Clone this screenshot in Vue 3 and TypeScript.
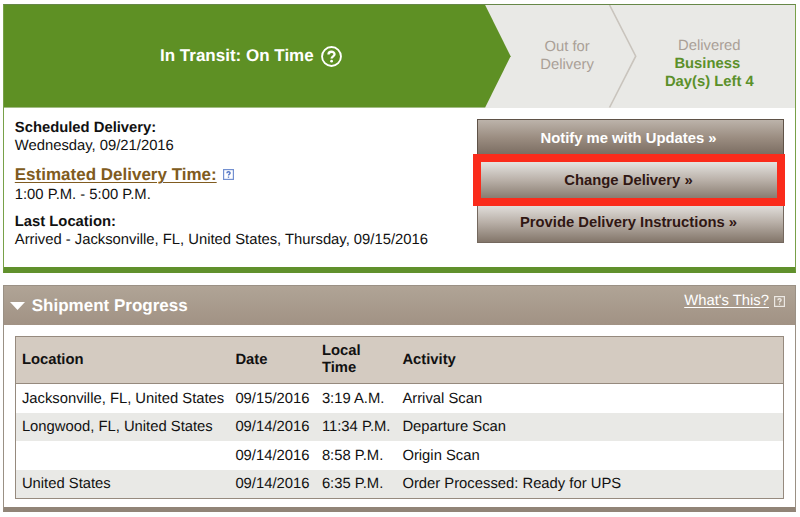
<script setup lang="ts">
interface ScanRow {
  location: string
  date: string
  time: string
  activity: string
}

const rows: ScanRow[] = [
  { location: 'Jacksonville, FL, United States', date: '09/15/2016', time: '3:19 A.M.', activity: 'Arrival Scan' },
  { location: 'Longwood, FL, United States', date: '09/14/2016', time: '11:34 P.M.', activity: 'Departure Scan' },
  { location: '', date: '09/14/2016', time: '8:58 P.M.', activity: 'Origin Scan' },
  { location: 'United States', date: '09/14/2016', time: '6:35 P.M.', activity: 'Order Processed: Ready for UPS' },
]
</script>

<template>
  <main class="page">
    <section class="status-card">
      <div class="steps">
        <svg class="steps-bg" viewBox="0 0 792 102.5" preserveAspectRatio="none" aria-hidden="true">
          <path d="M0 0H481.5L507 51.2L481.5 102.5H0Z" fill="#5e9024" />
          <path d="M606 0L632.2 51.2L606 102.5" fill="none" stroke="#c9c4bd" stroke-width="1.6" />
        </svg>
        <div class="step current">
          <span>In Transit: On Time</span>
          <svg class="help-round" viewBox="0 0 20 20" aria-hidden="true">
            <circle cx="10" cy="10" r="9" fill="none" stroke="#fff" stroke-width="1.8" />
            <path d="M7.1 8.2C7.1 4.6 12.9 4.6 12.9 7.9C12.9 9.9 10.1 9.8 10.1 12" fill="none" stroke="#fff" stroke-width="2.2" />
            <circle cx="10.1" cy="14.5" r="1.3" fill="#fff" />
          </svg>
        </div>
        <div class="step out">Out for<br />Delivery</div>
        <div class="step delivered">
          <span>Delivered</span>
          <strong class="business">Business</strong>
          <strong>Day(s) Left 4</strong>
        </div>
      </div>

      <div class="details">
        <div class="info">
          <p><b>Scheduled Delivery:</b><br />Wednesday, 09/21/2016</p>
          <p class="estimate">
            <span class="estimate-line">
              <a class="estimate-link">Estimated Delivery Time:</a>
              <svg class="help-blue" viewBox="0 0 11 11" aria-hidden="true">
                <rect x=".6" y=".6" width="9.8" height="9.8" fill="#fff" stroke="#7390d0" stroke-width="1.2" />
                <path d="M3.9 4.3C3.9 2.2 7.2 2.3 7.1 4.1C7 5.2 5.5 5.1 5.5 6.6M5.5 7.5V8.7" fill="none" stroke="#5577c6" stroke-width="1.4" />
              </svg>
            </span>
            1:00 P.M. - 5:00 P.M.
          </p>
          <p class="last"><b>Last Location:</b><br /><span class="arrived">Arrived - Jacksonville, FL, United States, Thursday, 09/15/2016</span></p>
        </div>
        <div class="actions">
          <button class="btn notify">Notify me with Updates »</button>
          <button class="btn change">Change Delivery »</button>
          <button class="btn provide">Provide Delivery Instructions »</button>
          <span class="highlight"></span>
        </div>
      </div>
    </section>

    <section class="progress-card">
      <header class="progress-head">
        <svg class="caret" viewBox="0 0 15 8" aria-hidden="true"><path d="M0 0H15L7.5 8Z" fill="#fff" /></svg>
        <h2>Shipment Progress</h2>
        <a class="whats">What's This?</a>
        <svg class="help-small" viewBox="0 0 11 11" aria-hidden="true">
          <rect x=".6" y=".6" width="9.8" height="9.8" fill="none" stroke="#ece8e3" stroke-width="1.2" />
          <path d="M3.9 4.3C3.9 2.2 7.2 2.3 7.1 4.1C7 5.2 5.5 5.1 5.5 6.6M5.5 7.5V8.7" fill="none" stroke="#eeeae5" stroke-width="1.3" />
        </svg>
      </header>
      <div class="table">
        <div class="row head">
          <span>Location</span><span>Date</span><span>Local<br />Time</span><span>Activity</span>
        </div>
        <div v-for="(row, i) in rows" :key="i" class="row" :class="{ shaded: i % 2 === 1 }">
          <span>{{ row.location }}</span><span>{{ row.date }}</span><span>{{ row.time }}</span><span>{{ row.activity }}</span>
        </div>
      </div>
    </section>
  </main>
</template>

<style>
body {
  margin: 0;
  background: #fff;
}
</style>

<style scoped>
* {
  box-sizing: border-box;
}
.page {
  width: 800px;
  height: 517px;
  padding: 4px 4px 0 2.6px;
  overflow: hidden;
  background: #fefefe;
  color: #111;
  font: 14.8px/18px "Liberation Sans", Arial, sans-serif;
  text-rendering: geometricPrecision;
}
.status-card {
  height: 269.3px;
  border: 1px solid #78a048;
  border-top-color: #668747;
  border-bottom: 6px solid #60902c;
  background: #fff;
}
.steps {
  position: relative;
  display: grid;
  grid-template-columns: 495px 137px 1fr;
  align-items: center;
  height: 102.5px;
  background: #e9e9e6;
  color: #aaa097;
  text-align: center;
}
.steps-bg {
  position: absolute;
  inset: 0;
  width: 100%;
  height: 100%;
}
.step {
  position: relative;
}
.current {
  display: flex;
  align-items: center;
  justify-content: center;
  gap: 7.5px;
  color: #fff;
  font-size: 17px;
  font-weight: bold;
}
.help-round {
  width: 21px;
  height: 21px;
}
.delivered {
  display: flex;
  flex-direction: column;
  padding: 15px 12px 0 0;
}
.delivered strong {
  color: #5b902a;
}
.business {
  padding-right: 4px;
}
.details {
  display: flex;
  justify-content: space-between;
  padding: 11px 11.5px 0 11.2px;
}
p {
  margin: 0;
}
.estimate {
  display: flex;
  flex-direction: column;
  margin-top: 9px;
}
.estimate-line {
  display: flex;
  align-items: center;
  gap: 6px;
  height: 22px;
}
.estimate-link {
  color: #805b20;
  font-size: 17px;
  font-weight: bold;
  text-decoration: underline;
  text-decoration-thickness: 1px;
  text-underline-offset: 2px;
}
.help-blue,
.help-small {
  width: 11px;
  height: 11px;
}
.last {
  margin-top: 9.5px;
}
.arrived {
  white-space: nowrap;
}
.actions {
  position: relative;
  display: flex;
  flex-direction: column;
  gap: 2px;
  width: 307px;
}
.btn {
  height: 40px;
  padding: 0 3px 2px 0;
  border: 1px solid #74685e;
  background: linear-gradient(#e5e3e0, #b9b0a8 48%, #83766a);
  color: #301713;
  font: bold 14.8px/18px "Liberation Sans", Arial, sans-serif;
}
.notify {
  border-color: #5f5247;
  background: linear-gradient(#bcb3aa, #9a8c80 48%, #74665b);
  color: #fff;
}
.highlight {
  position: absolute;
  top: 35.5px;
  left: -4px;
  width: 312px;
  height: 51.5px;
  border: 8.5px solid #fa2b1b;
}
.progress-card {
  height: 227.2px;
  margin-top: 11.7px;
  border: 1px solid #9a9084;
  border-bottom: 5px solid #918477;
  background: #fff;
}
.progress-head {
  display: flex;
  align-items: center;
  height: 39px;
  padding: 0 10px 0 6.5px;
  background: linear-gradient(#b0a496, #a19284);
  color: #fff;
}
.caret {
  width: 15px;
  height: 8px;
  margin-top: 2px;
}
h2 {
  flex: 1;
  margin: 2px 0 0 6.7px;
  font-size: 17px;
  line-height: 20px;
}
.whats {
  margin: -9px 5px 0 0;
  text-decoration: underline;
  text-decoration-thickness: 1px;
  text-underline-offset: 2px;
}
.help-small {
  margin-top: -7px;
}
.table {
  margin: 11.5px 11.5px 0;
  border: 1px solid #968a7e;
}
.row {
  display: grid;
  grid-template-columns: 213.5px 86.5px 80.5px 1fr;
  align-items: center;
  height: 28.5px;
  padding-left: 5.8px;
}
.head {
  height: 47px;
  border-bottom: 1px solid #968a7e;
  background: #d4cbc1;
  font-weight: bold;
  line-height: 17px;
}
.shaded {
  background: #e9e9e6;
}
</style>
